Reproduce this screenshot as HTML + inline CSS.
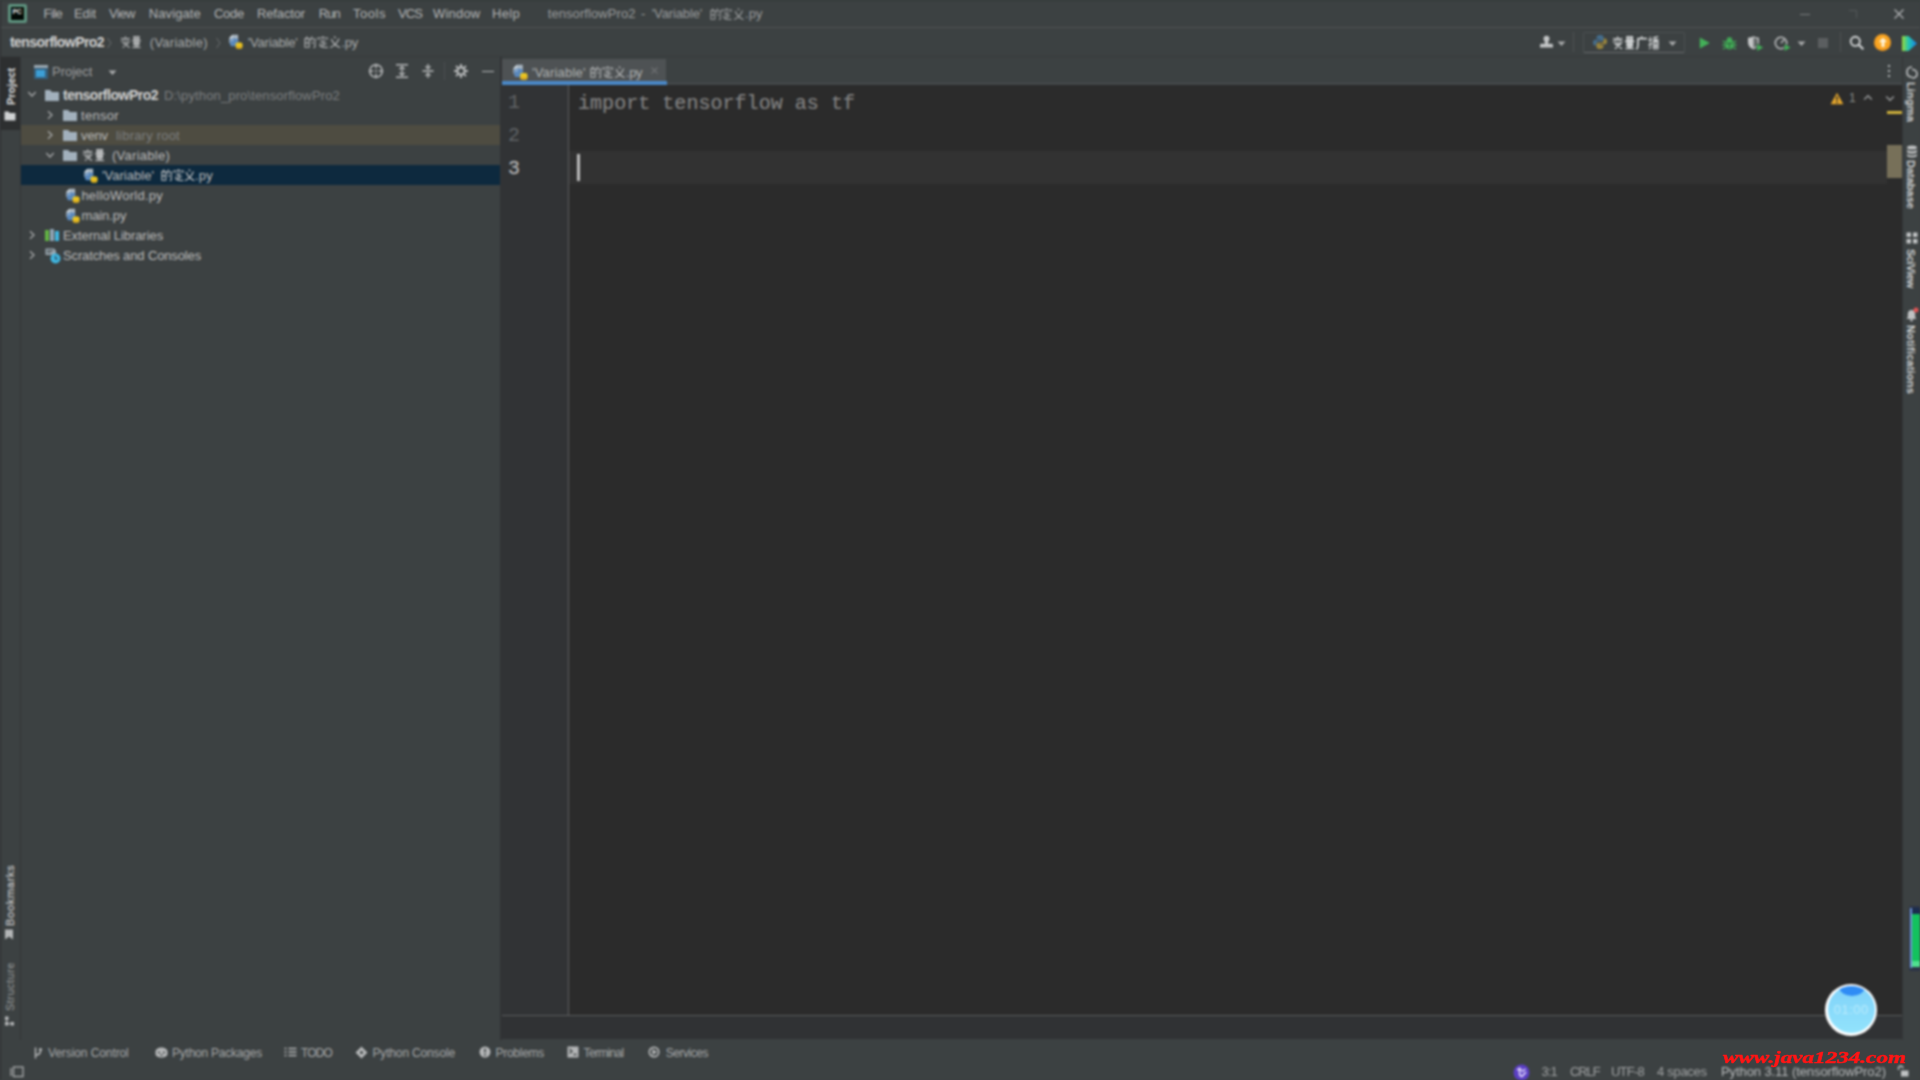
<!DOCTYPE html>
<html>
<head>
<meta charset="utf-8">
<title>PyCharm</title>
<style>
html,body{margin:0;padding:0;background:#3c4142;overflow:hidden;}
body{width:1920px;height:1080px;position:relative;font-family:"Liberation Sans",sans-serif;}
#root{position:absolute;left:0;top:0;width:1920px;height:1080px;overflow:hidden;background:#3c4142;}
#root div,#root span,#root svg{position:absolute;}
.t{white-space:pre;}
#fx{left:0;top:0;width:1920px;height:1080px;filter:blur(0.8px);}
</style>
</head>
<body>
<div id="root">
<div id="fx">
<!-- ================= BACKGROUND BLOCKS ================= -->
<div style="left:0;top:0;width:1920px;height:1080px;background:#3c4142;"></div>
<!-- title bar bottom line -->
<div style="left:0;top:27px;width:1920px;height:1px;background:#505354;"></div>
<!-- nav bar bottom line -->
<div style="left:0;top:56px;width:1920px;height:1px;background:#373b3c;"></div>
<!-- left stripe -->
<div style="left:0;top:57px;width:20px;height:983px;background:#3c4142;"></div>
<div style="left:0;top:57px;width:20px;height:73px;background:#2d2f30;"></div>
<div style="left:20px;top:57px;width:1px;height:983px;background:#333537;"></div>
<!-- project tree rows -->
<div style="left:21px;top:125px;width:479px;height:20px;background:#4e4c41;"></div>
<div style="left:21px;top:165px;width:479px;height:20px;background:#0d293e;"></div>
<!-- split between project and editor -->
<div style="left:500px;top:57px;width:2px;height:983px;background:#313335;"></div>
<!-- editor tab row -->
<div style="left:502px;top:57px;width:1400px;height:28px;background:#3c4142;"></div>
<div style="left:502px;top:59px;width:164px;height:26px;background:#4e5254;"></div>

<!-- editor -->
<div style="left:666px;top:82.700px;width:1236px;height:1.800px;background:#4c4f51;"></div>
<div style="left:502px;top:84.500px;width:1400px;height:954.500px;background:#2b2b2b;"></div>
<div style="left:502px;top:84.500px;width:66px;height:930.500px;background:#313335;"></div>
<div style="left:568px;top:84.500px;width:1px;height:930.500px;background:#5e5f60;"></div>
<div style="left:569px;top:151px;width:1318px;height:33px;background:#323232;"></div>
<div style="left:502px;top:80.700px;width:164.500px;height:4.300px;background:#4a88c7;"></div>
<!-- editor bottom strip -->
<div style="left:502px;top:1015px;width:1400px;height:1px;background:#5a5c5d;"></div>
<div style="left:502px;top:1016px;width:1400px;height:23px;background:#303234;"></div>
<!-- error stripe marks -->
<div style="left:1887px;top:110.500px;width:15px;height:3.500px;background:#d0b23c;"></div>
<div style="left:1887px;top:145px;width:15px;height:33px;background:#777059;"></div>
<!-- right stripe -->
<div style="left:1902px;top:57px;width:18px;height:983px;background:#3c4142;"></div>
<div style="left:1902px;top:57px;width:1px;height:983px;background:#333537;"></div>
<!-- top/left dark edge -->
<div style="left:0;top:0;width:1920px;height:1px;background:#2f3a37;"></div>
<div style="left:0;top:0;width:1px;height:1080px;background:#2c2e30;"></div>
<!-- ================= ICONS PART 1 ================= -->
<!-- PyCharm logo -->
<div style="left:8px;top:4px;width:19px;height:19px;background:#5f937f;border-radius:2px;"></div>
<div style="left:11px;top:7px;width:13px;height:13px;background:#020a06;"></div>
<span class="t" style="left:12.5px;top:7.5px;font-size:7px;line-height:8px;font-weight:700;color:#f0f0f0;letter-spacing:-0.3px;">PC</span>
<div style="left:13px;top:17px;width:5px;height:1px;background:#888;opacity:.0;"></div>

<!-- window controls -->
<div style="left:1800px;top:14px;width:10px;height:1px;background:#7a7c7d;"></div>
<svg style="left:1846px;top:8px;" width="14" height="14" viewBox="0 0 14 14"><path d="M3 2.5h7.5v7.5" fill="none" stroke="#54585a" stroke-width="1"/></svg>
<svg style="left:1893px;top:8px;" width="12" height="12" viewBox="0 0 12 12"><path d="M1.5 1.5l9 9M10.5 1.5l-9 9" fill="none" stroke="#b0b2b3" stroke-width="1.3"/></svg>

<!-- nav bar separators -->
<svg style="left:105px;top:36px;" width="8" height="14" viewBox="0 0 8 14"><path d="M2.5 2l3.5 5-3.5 5" fill="none" stroke="#6a6d6f" stroke-width="1"/></svg>
<svg style="left:214px;top:36px;" width="8" height="14" viewBox="0 0 8 14"><path d="M2.5 2l3.5 5-3.5 5" fill="none" stroke="#6a6d6f" stroke-width="1"/></svg>

<!-- python file icon symbol -->
<svg width="0" height="0" style="left:0;top:0;">
<defs>
<symbol id="py" viewBox="0 0 16 16">
  <path d="M1.300 4.300L4.800 0.800h6v8.700H1.300z" fill="#a9b6c1"/>
  <path d="M1.300 4.300L4.800 0.800v3.500z" fill="#d5dde3"/>
  <path d="M2.200 7c0-1.400 1.100-2.200 2.800-2.200h3.400c1.500 0 2.500.8 2.500 2.200v3.800c0 1.500-1 2.300-2.500 2.300H5c-1.700 0-2.800-.8-2.800-2.300z" fill="#5a88bc"/>
  <circle cx="4.600" cy="6.600" r=".8" fill="#dfe9f2"/>
  <rect x="8.200" y="9" width="7.300" height="6.700" rx="2" fill="#e9c522"/>
  <path d="M8.500 14.200h6.200" stroke="#d99a1c" stroke-width="1.600" opacity=".7"/>
</symbol>
<symbol id="folder" viewBox="0 0 16 16">
  <path d="M1 3h5.200l1.600 2H15v9H1z" fill="#a2b0bc"/>
</symbol>
<symbol id="cB" viewBox="0 0 12 12"><path d="M6 0.300v1.700M1 2.500h10M4.500 2.500v3M7.500 2.500v3M2.600 3.800l-1.200 1.800M9.400 3.800l1.200 1.800M2.500 6.700h6.800L3 11.600M3.800 7.600l6.900 4" stroke="currentColor" stroke-width="1.150" fill="none"/></symbol>
<symbol id="cL" viewBox="0 0 12 12"><path d="M3 0.600h6v3H3zM3 2.100h6M0.800 4.800h10.400M3 6.100h6v2.600H3zM3 7.400h6M6 6.100v5.200M3 10h6M1.300 11.500h9.400" stroke="currentColor" stroke-width="1.100" fill="none"/></symbol>
<symbol id="cD" viewBox="0 0 12 12"><path d="M3.200 0.400L2.500 2.300M1 2.600h4.200v8.600H1zM1 6.800h4.200M8.200 0.400L6.600 4.200M7.200 3h3.900v7.600c0 .8-.5 1.100-1.700 1.100M8 5.800l1.100 1.900" stroke="currentColor" stroke-width="1.150" fill="none"/></symbol>
<symbol id="cG" viewBox="0 0 12 12"><path d="M6 0v1.700M1 3.800V2h10v1.800M3 5h6M6 5v6.300M6 7.800h3.600M3.600 7.200L3 9.500c.3 1.200 3 2 8.300 2" stroke="currentColor" stroke-width="1.150" fill="none"/></symbol>
<symbol id="cY" viewBox="0 0 12 12"><path d="M5.300 0.400l1.300 1.900M10.200 2.400C8.500 6.500 5.500 9.700 1.200 11.600M2.400 3c1.400 4 4.400 7 8.800 8.600" stroke="currentColor" stroke-width="1.200" fill="none"/></symbol>
<symbol id="cA" viewBox="0 0 12 12"><path d="M6 0v1.800M1.500 2.200h9.700M2.100 2.200v5c0 2-.3 3.300-1.300 4.500" stroke="currentColor" stroke-width="1.250" fill="none"/></symbol>
<symbol id="cO" viewBox="0 0 12 12"><path d="M0.400 3.500h3.700M2.300 0.400v10.200c0 .7-.3 1-1.400 1M0.400 8.200l3.700-1.600M5 1.600l5.800-1.100M4.600 3.600h7M8.100 1.100v5M8.100 3.600L4.700 6.400M8.100 3.600l3.400 2.800M5.600 7.100h5v4.500h-5zM5.600 9.300h5M8.100 7.100v4.500" stroke="currentColor" stroke-width="1.050" fill="none"/></symbol>
<symbol id="arrR" viewBox="0 0 10 10"><path d="M3 1.300l4 3.700-4 3.700" fill="none" stroke="#a5a7a8" stroke-width="1.300"/></symbol>
<symbol id="arrD" viewBox="0 0 10 10"><path d="M1.300 3l3.700 4 3.700-4" fill="none" stroke="#a5a7a8" stroke-width="1.300"/></symbol>
</defs>
</svg>

<!-- nav bar: CJK (2 chars), py icon, CJK (3 chars) -->
<svg style="left:228px;top:34px;" width="15" height="15"><use href="#py"/></svg>
<!-- title CJK (3 chars) -->

<!-- project header: icon, dropdown, tool icons -->
<div style="left:33.500px;top:64.500px;width:14px;height:14px;background:#35607e;"></div>
<div style="left:33.500px;top:64.500px;width:14px;height:3.500px;background:#9aa7b0;"></div>
<div style="left:36px;top:69.500px;width:9px;height:7px;background:#3d9fd6;"></div>
<svg style="left:107.500px;top:69.500px;" width="9" height="6" viewBox="0 0 9 6"><path d="M0.500 0.500h8L4.500 5z" fill="#a8aaab"/></svg>
<!-- locate -->
<svg style="left:368px;top:63px;" width="16" height="16" viewBox="0 0 16 16"><circle cx="8" cy="8" r="6.300" fill="none" stroke="#b6b8b9" stroke-width="1.500"/><path d="M8 0.800v4.400M8 10.800v4.400M0.800 8h4.400M10.800 8h4.400" stroke="#b6b8b9" stroke-width="1.500"/><circle cx="8" cy="8" r="1" fill="#b6b8b9"/></svg>
<!-- expand all -->
<svg style="left:394px;top:63px;" width="16" height="16" viewBox="0 0 16 16"><path d="M2 1.800h12M2 14.200h12" stroke="#b6b8b9" stroke-width="1.600"/><path d="M8 4v8" stroke="#b6b8b9" stroke-width="1.400"/><path d="M5.300 6.300L8 3.600l2.700 2.700M5.300 9.700L8 12.400l2.700-2.700" fill="none" stroke="#b6b8b9" stroke-width="1.300"/></svg>
<!-- collapse all -->
<svg style="left:420px;top:63px;" width="16" height="16" viewBox="0 0 16 16"><path d="M2.500 8h11" stroke="#b6b8b9" stroke-width="1.600"/><path d="M8 1v4.500M8 10.500V15" stroke="#b6b8b9" stroke-width="1.400"/><path d="M5.500 3.300L8 5.800l2.500-2.500M5.500 12.700L8 10.200l2.500 2.500" fill="none" stroke="#b6b8b9" stroke-width="1.300"/></svg>
<div style="left:444px;top:62px;width:1px;height:18px;background:#4c4f51;"></div>
<!-- gear -->
<svg style="left:454px;top:64px;" width="14" height="14" viewBox="0 0 14 14"><circle cx="7" cy="7" r="3.600" fill="none" stroke="#b6b8b9" stroke-width="2.200"/><path d="M7 0v3M7 11v3M0 7h3M11 7h3M2.050 2.050l2.100 2.100M9.850 9.850l2.100 2.100M2.050 11.950l2.100-2.100M9.850 4.150l2.100-2.100" stroke="#b6b8b9" stroke-width="2"/></svg>
<!-- minus -->
<div style="left:481.500px;top:70.500px;width:12px;height:1.600px;background:#b6b8b9;"></div>

<!-- tree arrows -->
<svg style="left:26.500px;top:88.500px;" width="10" height="10"><use href="#arrD"/></svg>
<svg style="left:44.500px;top:110px;" width="10" height="10"><use href="#arrR"/></svg>
<svg style="left:44.500px;top:130px;" width="10" height="10"><use href="#arrR"/></svg>
<svg style="left:45px;top:149.500px;" width="10" height="10"><use href="#arrD"/></svg>
<svg style="left:26.500px;top:230px;" width="10" height="10"><use href="#arrR"/></svg>
<svg style="left:26.500px;top:250px;" width="10" height="10"><use href="#arrR"/></svg>
<!-- tree folders -->
<svg style="left:44px;top:86.500px;" width="16" height="16"><use href="#folder"/></svg>
<svg style="left:62px;top:106.500px;" width="16" height="16"><use href="#folder"/></svg>
<svg style="left:62px;top:126.500px;" width="16" height="16"><use href="#folder"/></svg>
<svg style="left:62px;top:146.500px;" width="16" height="16"><use href="#folder"/></svg>
<!-- tree CJK -->
<!-- tree py icons -->
<svg style="left:82.500px;top:167.500px;" width="15" height="15"><use href="#py"/></svg>
<svg style="left:64.500px;top:187.500px;" width="15" height="15"><use href="#py"/></svg>
<svg style="left:64.500px;top:207.500px;" width="15" height="15"><use href="#py"/></svg>
<!-- external libraries icon -->
<div style="left:45px;top:230px;width:3.500px;height:11px;background:#62b543;"></div>
<div style="left:50px;top:228.500px;width:3.500px;height:12.500px;background:#8fa3b3;"></div>
<div style="left:55px;top:231px;width:3.500px;height:10px;background:#40b6e0;"></div>
<!-- scratches icon -->
<svg style="left:44px;top:247px;" width="18" height="18" viewBox="0 0 18 18"><path d="M1.500 1.500h8.500l2 2V8H1.500z" fill="#9aa7b0"/><path d="M3 3.500h6M3 5.500h4" stroke="#3c4142" stroke-width="1"/><circle cx="11.500" cy="11.500" r="5" fill="#40b6e0"/><path d="M11.500 8.800v3h2.200" fill="none" stroke="#2b4a5c" stroke-width="1.200"/></svg>

<!-- tab: py icon, CJK, close -->
<svg style="left:512px;top:63.500px;" width="16" height="16"><use href="#py"/></svg>
<svg style="left:649.500px;top:65.500px;" width="9" height="9" viewBox="0 0 9 9"><path d="M1.500 1.500l6 6M7.500 1.500l-6 6" stroke="#6e7173" stroke-width="1.100" fill="none"/></svg>

<!-- ================= ICONS PART 2 ================= -->
<!-- caret -->
<div style="left:577px;top:154px;width:3px;height:27px;background:#bdbdbd;"></div>

<!-- toolbar: user icon + dropdown -->
<svg style="left:1539px;top:35px;" width="15" height="14" viewBox="0 0 15 14"><circle cx="7.500" cy="3.800" r="3" fill="#c3c5c6"/><path d="M5.800 5.500h3.400v3.300h3.300c1 0 1.500.6 1.500 1.500V12.500H1V10.300c0-.9.500-1.500 1.500-1.500h3.300z" fill="#c3c5c6"/></svg>
<svg style="left:1556.500px;top:40.500px;" width="9" height="6" viewBox="0 0 9 6"><path d="M0.500 0.500h8L4.500 5z" fill="#a8aaab"/></svg>
<div style="left:1572.500px;top:32px;width:1px;height:20px;background:#4f5254;"></div>
<!-- run config box -->
<div style="left:1583px;top:32px;width:102px;height:21px;border:1px solid #4c5052;border-bottom-color:#686b6d;box-sizing:border-box;border-radius:2px;"></div>
<svg style="left:1592px;top:34px;opacity:.6;" width="16" height="16" viewBox="0 0 16 16"><path d="M7.600 1C5.200 1 4.600 2 4.600 3.200V5h3.600v.7H3C1.700 5.700 1 6.800 1 8.600c0 1.800.7 2.900 2 2.900h1.400V9.600c0-1.300 1.100-2.400 2.400-2.400h3c1 0 1.800-.8 1.800-1.900V3.200C11.600 2 10.500 1 9 1z" fill="#4b8bbe"/><path d="M8.400 15c2.400 0 3-1 3-2.200V11H7.800v-.7H13c1.300 0 2-1.100 2-2.900 0-1.800-.7-2.900-2-2.900h-1.400v1.900c0 1.300-1.100 2.400-2.400 2.400h-3c-1 0-1.800.8-1.800 1.900v2.100c0 1.200 1.100 2.200 2.600 2.200z" fill="#d6b13c"/></svg>
<svg style="left:1636px;top:36.500px;color:#d4d6d7;" width="12" height="13" viewBox="0 0 12 12" preserveAspectRatio="none"><path d="M2 1.500h9M2 1.500v6c0 2-.5 3-1.500 4" stroke="currentColor" stroke-width="1.200" fill="none"/></svg>
<svg style="left:1667.500px;top:40.500px;" width="9" height="6" viewBox="0 0 9 6"><path d="M0.500 0.500h8L4.500 5z" fill="#a8aaab"/></svg>
<!-- run -->
<svg style="left:1699px;top:37px;" width="12" height="12" viewBox="0 0 12 12"><path d="M0.800 0.600L10.800 6 0.800 11.400z" fill="#43b058"/></svg>
<!-- debug -->
<svg style="left:1722px;top:36px;" width="15" height="15" viewBox="0 0 15 15"><ellipse cx="7.500" cy="8.300" rx="4.300" ry="5.200" fill="#43b058"/><path d="M4.700 3.500a2.800 2.300 0 0 1 5.600 0z" fill="#43b058"/><path d="M0.800 5l2.800 1.600M14.200 5l-2.800 1.600M0.500 9h3M14.500 9h-3M1 13l2.800-1.800M14 13l-2.800-1.800" stroke="#43b058" stroke-width="1.300"/><path d="M4 7.300h7M7.500 7.300v6" stroke="#2f5b3a" stroke-width="1"/></svg>
<!-- coverage -->
<svg style="left:1747px;top:35.500px;" width="18" height="16" viewBox="0 0 18 16"><path d="M1 1.800C3.500 1.800 5 1 6.500 0.300 8 1 9.500 1.800 12 1.800v4.800c0 3.200-2.300 5.600-5.500 6.700C3.300 12.200 1 9.800 1 6.600z" fill="#c4c6c7"/><path d="M6.500 1.600v10.400c2.300-1 4.300-2.900 4.300-5.400V2.900c-1.700-.1-3-.6-4.300-1.300z" fill="#3c4142" opacity=".7"/><path d="M9.800 7.600l7 4-7 4z" fill="#43b058" stroke="#3c4142" stroke-width=".8"/></svg>
<!-- profile -->
<svg style="left:1774px;top:35.500px;" width="18" height="16" viewBox="0 0 18 16"><circle cx="7" cy="7" r="5.700" fill="none" stroke="#b9bbbc" stroke-width="1.600"/><path d="M7 7L10.500 3.200" stroke="#b9bbbc" stroke-width="1.400"/><path d="M10.200 7.600l7 4-7 4z" fill="#43b058" stroke="#3c4142" stroke-width=".8"/></svg>
<svg style="left:1797px;top:40.500px;" width="9" height="6" viewBox="0 0 9 6"><path d="M0.500 0.500h8L4.500 5z" fill="#a8aaab"/></svg>
<!-- stop -->
<div style="left:1817.500px;top:38px;width:10px;height:10px;background:#5b5e60;"></div>
<div style="left:1839.500px;top:32px;width:1px;height:20px;background:#4f5254;"></div>
<!-- search -->
<svg style="left:1849px;top:35px;" width="16" height="16" viewBox="0 0 16 16"><circle cx="6.300" cy="6.300" r="4.600" fill="none" stroke="#d2d4d5" stroke-width="1.900"/><path d="M9.800 9.800l4.500 4.500" stroke="#d2d4d5" stroke-width="2.100"/></svg>
<!-- update orange -->
<div style="left:1874px;top:34px;width:17px;height:17px;border-radius:50%;background:radial-gradient(circle at 50% 45%,#ffb732 0,#f59a1b 70%,#e8850f 100%);"></div>
<svg style="left:1877.500px;top:37px;" width="10" height="11" viewBox="0 0 10 11"><path d="M5 0.800L9 5H6.400v5H3.600V5H1z" fill="#fff6e0"/></svg>
<!-- colorful icon -->
<svg style="left:1901px;top:34.500px;" width="17" height="17" viewBox="0 0 17 17"><defs><linearGradient id="cg" x1="0" y1="0" x2="1" y2="0"><stop offset="0" stop-color="#9bd93a"/><stop offset=".45" stop-color="#1fc4b4"/><stop offset="1" stop-color="#1b7fe8"/></linearGradient></defs><path d="M1 1h6.500L16 8.500 7.500 16H1z" fill="url(#cg)"/></svg>

<!-- editor top-right: 3 dots, warning, chevrons -->
<div style="left:1888.300px;top:64.800px;width:2px;height:2px;background:#b4b6b7;"></div>
<div style="left:1888.300px;top:70.200px;width:2px;height:2px;background:#b4b6b7;"></div>
<div style="left:1888.300px;top:75px;width:2px;height:2px;background:#b4b6b7;"></div>
<svg style="left:1830px;top:91.500px;" width="14" height="13" viewBox="0 0 14 13"><path d="M7 0.800L13.400 12.200H0.600z" fill="#e2a52c"/><path d="M7 4.300v4.200" stroke="#2b2b2b" stroke-width="1.500"/><circle cx="7" cy="10.300" r=".9" fill="#2b2b2b"/></svg>
<svg style="left:1863px;top:94px;" width="10" height="7" viewBox="0 0 10 7"><path d="M1.200 5.500L5 1.700l3.800 3.800" fill="none" stroke="#9a9c9d" stroke-width="1.400"/></svg>
<svg style="left:1884.600px;top:95px;" width="10" height="7" viewBox="0 0 10 7"><path d="M1.200 1.500L5 5.300l3.800-3.800" fill="none" stroke="#9a9c9d" stroke-width="1.400"/></svg>

<!-- left stripe icons -->
<svg style="left:4px;top:109.500px;" width="12" height="11" viewBox="0 0 12 11"><path d="M0.500 1.500h4l1.200 1.500h5.800v7.500h-11z" fill="#d0d2d3"/></svg>
<svg style="left:4px;top:928.500px;" width="10" height="11" viewBox="0 0 10 11"><path d="M1 0.500h8v10L5 7.500 1 10.500z" fill="#b4b6b7"/></svg>
<svg style="left:3.800px;top:1016px;" width="11" height="10" viewBox="0 0 11 10"><path d="M1 0.500h3.500v3.500H1zM1 6h3.500v3.500H1zM6.500 6H10v3.500H6.500z" fill="#b4b6b7"/><path d="M2.700 4v2M4.500 7.700h2" stroke="#b4b6b7" stroke-width="1"/></svg>

<!-- right stripe icons -->
<svg style="left:1905px;top:66px;" width="14" height="13" viewBox="0 0 14 13"><path d="M7 1C4 1 2 3 2 6s2 5 5 5M7 3.500C9.500 3.500 12 5 12 8s-2 4-5 4" fill="none" stroke="#c0c2c3" stroke-width="1.600"/></svg>
<svg style="left:1905.500px;top:144.500px;" width="12" height="13" viewBox="0 0 12 13"><ellipse cx="6" cy="2.600" rx="5" ry="2" fill="#c0c2c3"/><path d="M1 4.200c0 1.100 2.200 2 5 2s5-.9 5-2v2.600c0 1.100-2.200 2-5 2s-5-.9-5-2zM1 8.400c0 1.100 2.200 2 5 2s5-.9 5-2V10.500c0 1.100-2.200 2-5 2s-5-.9-5-2z" fill="#c0c2c3"/></svg>
<svg style="left:1905.500px;top:232px;" width="12" height="12" viewBox="0 0 12 12"><path d="M0.500 0.500h4.500v4.500H0.500zM7 0.500h4.500v4.500H7zM0.500 7h4.500v4.500H0.500zM7 7h4.500v4.500H7z" fill="#c0c2c3"/></svg>
<svg style="left:1904.500px;top:307px;" width="14" height="15" viewBox="0 0 14 15"><path d="M6.500 3C4 3 2.800 5 2.800 7.200v3L1.500 12h10l-1.300-1.800v-3C10.200 5 9 3 6.500 3z" fill="#c0c2c3"/><circle cx="6.500" cy="13.200" r="1.200" fill="#c0c2c3"/><circle cx="11" cy="3" r="2.500" fill="#e05555"/></svg>

<!-- bottom bar icons -->
<svg style="left:32.500px;top:1046.500px;" width="10" height="12" viewBox="0 0 10 12"><path d="M2.500 0.500v11M2.500 8C6 8 7.500 6.500 7.500 3.500" fill="none" stroke="#b4b6b7" stroke-width="1.500"/><circle cx="7.500" cy="2.500" r="1.600" fill="#b4b6b7"/></svg>
<svg style="left:155px;top:1046.500px;" width="13" height="11" viewBox="0 0 13 11"><path d="M6.500 0.500c3.300 0 6 1.800 6 4.200v2.600c0 1.700-2.700 3.200-6 3.200s-6-1.500-6-3.200V4.700c0-2.400 2.700-4.200 6-4.200z" fill="#b4b6b7"/><path d="M3 5.500h2M8 5.500h2M5.500 8h2" stroke="#3c4142" stroke-width="1.300"/></svg>
<svg style="left:284px;top:1046.500px;" width="13" height="10" viewBox="0 0 13 10"><path d="M0.500 1.500h2M4.500 1.500h8M0.500 5h2M4.500 5h8M0.500 8.500h2M4.500 8.500h8" stroke="#b4b6b7" stroke-width="1.700"/></svg>
<svg style="left:355px;top:1046px;" width="13" height="13" viewBox="0 0 13 13"><path d="M6.500 0.500l3 3-3 3-3-3zM6.500 6.500l3 3-3 3-3-3zM0.500 6.500l3-3 3 3-3 3zM12.500 6.500l-3-3-3 3 3 3z" fill="#b4b6b7"/><circle cx="6.500" cy="6.500" r="1.500" fill="#3c4142"/></svg>
<svg style="left:479px;top:1046px;" width="12" height="12" viewBox="0 0 12 12"><circle cx="6" cy="6" r="5.500" fill="#b4b6b7"/><path d="M6 2.800v3.700" stroke="#3c4142" stroke-width="1.600"/><circle cx="6" cy="8.800" r="1" fill="#3c4142"/></svg>
<svg style="left:566.500px;top:1046px;" width="12" height="12" viewBox="0 0 12 12"><rect x="0.500" y="0.500" width="11" height="11" fill="#b4b6b7"/><path d="M2.500 3l2.500 2.200L2.500 7.500M6.500 8.500h3" fill="none" stroke="#3c4142" stroke-width="1.300"/></svg>
<svg style="left:648px;top:1046px;" width="13" height="12" viewBox="0 0 13 12"><circle cx="6" cy="6" r="4.700" fill="none" stroke="#b4b6b7" stroke-width="1.700"/><path d="M4.300 3L9.300 6 4.300 9z" fill="#b4b6b7"/></svg>

<!-- status bar icons -->
<svg style="left:9.500px;top:1066px;" width="14" height="12" viewBox="0 0 14 12"><rect x="3.500" y="1" width="9.500" height="9.500" fill="none" stroke="#a9abac" stroke-width="1.300"/><path d="M1 2v8" stroke="#a9abac" stroke-width="1.300"/></svg>
<svg style="left:1513px;top:1063.500px;" width="17" height="17" viewBox="0 0 17 17"><circle cx="8.500" cy="8.500" r="8" fill="#5b3fc4"/><path d="M4 5.500h5M6.500 3.500v6c0 2 1 3 3 3M8.500 8l4-3M9 12.500l4-4.500" fill="none" stroke="#e8e0ff" stroke-width="1.500"/></svg>
<svg style="left:1897px;top:1065px;" width="12" height="12" viewBox="0 0 12 12"><path d="M1.500 5V3.300C1.500 1.800 2.500 1 3.700 1S6 1.800 6 3.300" fill="none" stroke="#c0c2c3" stroke-width="1.300"/><rect x="4" y="5.500" width="7.500" height="6" fill="#c0c2c3"/></svg>

<!-- green meter on right edge -->
<div style="left:1908.500px;top:905.500px;width:11.500px;height:65px;background:#2b3347;border-radius:2px 0 0 2px;"></div>
<div style="left:1910.300px;top:907.500px;width:2px;height:60px;background:#6f93d4;"></div>
<div style="left:1912.300px;top:907.500px;width:7.700px;height:7px;background:#1b2c4e;"></div>
<div style="left:1912.300px;top:914px;width:7.700px;height:53px;background:#13c25e;"></div>
<div style="left:1912.300px;top:961px;width:7.700px;height:6px;background:#4fe08f;"></div>

<!-- floating circle -->
<div style="left:1825px;top:983.500px;width:52px;height:52px;border-radius:50%;background:#ffffff;"></div>
<div style="left:1827.500px;top:986px;width:47px;height:47px;border-radius:50%;background:linear-gradient(#80d2f9,#92e3fc);overflow:hidden;">
  <div style="left:11.500px;top:-9px;width:26px;height:19px;border-radius:50%;background:#2f8cf5;"></div>
</div>
<span class="t" style="left:1833.500px;top:1002px;font-size:13px;line-height:16px;color:#d8f6ff;opacity:.6;letter-spacing:.5px;">01:00</span>


<span class="t" style="left:43.5px;top:4.0px;line-height:20px;font-size:13px;color:#b4b6b7;letter-spacing:-0.54px;">File</span>
<span class="t" style="left:74.0px;top:4.0px;line-height:20px;font-size:13px;color:#b4b6b7;letter-spacing:-0.10px;">Edit</span>
<span class="t" style="left:109.0px;top:4.0px;line-height:20px;font-size:13px;color:#b4b6b7;letter-spacing:-0.49px;">View</span>
<span class="t" style="left:148.8px;top:4.0px;line-height:20px;font-size:13px;color:#b4b6b7;letter-spacing:0.09px;">Navigate</span>
<span class="t" style="left:214.0px;top:4.0px;line-height:20px;font-size:13px;color:#b4b6b7;letter-spacing:-0.27px;">Code</span>
<span class="t" style="left:257.0px;top:4.0px;line-height:20px;font-size:13px;color:#b4b6b7;letter-spacing:-0.14px;">Refactor</span>
<span class="t" style="left:318.7px;top:4.0px;line-height:20px;font-size:13px;color:#b4b6b7;letter-spacing:-0.85px;">Run</span>
<span class="t" style="left:353.0px;top:4.0px;line-height:20px;font-size:13px;color:#b4b6b7;letter-spacing:0.53px;">Tools</span>
<span class="t" style="left:398.0px;top:4.0px;line-height:20px;font-size:13px;color:#b4b6b7;letter-spacing:-0.91px;">VCS</span>
<span class="t" style="left:433.0px;top:4.0px;line-height:20px;font-size:13px;color:#b4b6b7;letter-spacing:0.19px;">Window</span>
<span class="t" style="left:492.0px;top:4.0px;line-height:20px;font-size:13px;color:#b4b6b7;letter-spacing:0.31px;">Help</span>
<span class="t" style="left:547.7px;top:4.0px;line-height:20px;font-size:13px;color:#9a9c9d;letter-spacing:0.09px;">tensorflowPro2</span>
<span class="t" style="left:641.0px;top:4.0px;line-height:20px;font-size:13px;color:#9a9c9d;">-</span>
<span class="t" style="left:651.7px;top:4.0px;line-height:20px;font-size:13px;color:#9a9c9d;letter-spacing:-0.12px;">&#x27;Variable&#x27;</span>
<span class="t" style="left:745.0px;top:4.0px;line-height:20px;font-size:13px;color:#9a9c9d;letter-spacing:0.09px;">.py</span>
<span class="t" style="left:10.0px;top:32.1px;line-height:20px;font-size:14px;color:#d0d0d0;font-weight:700;letter-spacing:-0.56px;">tensorflowPro2</span>
<span class="t" style="left:149.8px;top:32.5px;line-height:20px;font-size:13px;color:#a8aaab;letter-spacing:0.26px;">(Variable)</span>
<span class="t" style="left:247.7px;top:32.5px;line-height:20px;font-size:13px;color:#a8aaab;letter-spacing:-0.17px;">&#x27;Variable&#x27;</span>
<span class="t" style="left:341.5px;top:32.5px;line-height:20px;font-size:13px;color:#a8aaab;letter-spacing:-0.28px;">.py</span>
<span class="t" style="left:52.0px;top:61.5px;line-height:20px;font-size:13px;color:#9c9e9f;">Project</span>
<span class="t" style="left:63.0px;top:85.2px;line-height:20px;font-size:14px;color:#d0d0d0;font-weight:700;letter-spacing:-0.49px;">tensorflowPro2</span>
<span class="t" style="left:164.0px;top:85.5px;line-height:20px;font-size:13px;color:#7d7f80;letter-spacing:0.14px;">D:\python_pro\tensorflowPro2</span>
<span class="t" style="left:81.0px;top:105.5px;line-height:20px;font-size:13px;color:#bbbbbb;letter-spacing:0.31px;">tensor</span>
<span class="t" style="left:81.0px;top:125.5px;line-height:20px;font-size:13px;color:#bbbbbb;letter-spacing:-0.12px;">venv</span>
<span class="t" style="left:116.0px;top:125.5px;line-height:20px;font-size:13px;color:#7d7f80;letter-spacing:0.21px;">library root</span>
<span class="t" style="left:112.0px;top:145.5px;line-height:20px;font-size:13px;color:#bbbbbb;letter-spacing:0.26px;">(Variable)</span>
<span class="t" style="left:102.0px;top:165.5px;line-height:20px;font-size:13px;color:#bbbbbb;letter-spacing:0.03px;">&#x27;Variable&#x27;</span>
<span class="t" style="left:195.0px;top:165.5px;line-height:20px;font-size:13px;color:#bbbbbb;letter-spacing:0.22px;">.py</span>
<span class="t" style="left:81.4px;top:185.5px;line-height:20px;font-size:13px;color:#bbbbbb;letter-spacing:0.24px;">helloWorld.py</span>
<span class="t" style="left:81.4px;top:205.5px;line-height:20px;font-size:13px;color:#bbbbbb;letter-spacing:-0.08px;">main.py</span>
<span class="t" style="left:63.0px;top:225.5px;line-height:20px;font-size:13px;color:#bbbbbb;letter-spacing:-0.06px;">External Libraries</span>
<span class="t" style="left:63.0px;top:245.5px;line-height:20px;font-size:13px;color:#bbbbbb;letter-spacing:-0.13px;">Scratches and Consoles</span>
<span class="t" style="left:508.0px;top:89.0px;line-height:28px;font-size:20px;color:#606366;font-family:'Liberation Mono', monospace;">1</span>
<span class="t" style="left:508.0px;top:122.0px;line-height:28px;font-size:20px;color:#606366;font-family:'Liberation Mono', monospace;">2</span>
<span class="t" style="left:508.0px;top:155.0px;line-height:28px;font-size:20px;color:#b0b0b0;font-family:'Liberation Mono', monospace;-webkit-text-stroke:0.3px #b0b0b0;">3</span>
<span class="t" style="left:578.0px;top:89.5px;line-height:28px;font-size:20px;color:#828282;font-family:'Liberation Mono', monospace;letter-spacing:0.04px;-webkit-text-stroke:0.2px #828282;">import tensorflow as tf</span>
<span class="t" style="left:1849.0px;top:88.3px;line-height:20px;font-size:12px;color:#8a8f8c;">1</span>
<span class="t" style="left:48.0px;top:1043.1px;line-height:20px;font-size:12px;color:#a6a8a9;letter-spacing:-0.09px;">Version Control</span>
<span class="t" style="left:172.0px;top:1043.1px;line-height:20px;font-size:12px;color:#a6a8a9;letter-spacing:-0.23px;">Python Packages</span>
<span class="t" style="left:301.0px;top:1043.1px;line-height:20px;font-size:12px;color:#a6a8a9;letter-spacing:-0.86px;">TODO</span>
<span class="t" style="left:372.5px;top:1043.1px;line-height:20px;font-size:12px;color:#a6a8a9;letter-spacing:-0.16px;">Python Console</span>
<span class="t" style="left:495.5px;top:1043.1px;line-height:20px;font-size:12px;color:#a6a8a9;letter-spacing:-0.27px;">Problems</span>
<span class="t" style="left:583.6px;top:1043.1px;line-height:20px;font-size:12px;color:#a6a8a9;letter-spacing:-0.67px;">Terminal</span>
<span class="t" style="left:665.7px;top:1043.1px;line-height:20px;font-size:12px;color:#a6a8a9;letter-spacing:-0.46px;">Services</span>
<span class="t" style="left:1541.6px;top:1061.8px;line-height:20px;font-size:13px;color:#a0a2a3;letter-spacing:-1.03px;">3:1</span>
<span class="t" style="left:1570.0px;top:1061.8px;line-height:20px;font-size:13px;color:#a0a2a3;letter-spacing:-1.11px;">CRLF</span>
<span class="t" style="left:1611.0px;top:1061.8px;line-height:20px;font-size:13px;color:#a0a2a3;letter-spacing:-0.77px;">UTF-8</span>
<span class="t" style="left:1657.0px;top:1061.8px;line-height:20px;font-size:13px;color:#a0a2a3;letter-spacing:-0.29px;">4 spaces</span>
<span class="t" style="left:1721.0px;top:1061.8px;line-height:20px;font-size:13px;color:#b8babb;letter-spacing:-0.09px;">Python 3.11 (tensorflowPro2)</span>
<span class="t" style="left:532.0px;top:62.6px;line-height:20px;font-size:13px;color:#b0b2b3;letter-spacing:0.19px;">&#x27;Variable&#x27;</span>
<span class="t" style="left:626.0px;top:62.6px;line-height:20px;font-size:13px;color:#b0b2b3;letter-spacing:-0.45px;">.py</span>
<span class="t" style="left:10.5px;top:96.0px;line-height:18px;font-size:11px;color:#e0e2e3;font-weight:700;letter-spacing:-0.04px;transform-origin:0 50%;transform:rotate(-90deg);">Project</span>
<span class="t" style="left:9.6px;top:916.5px;line-height:18px;font-size:11px;color:#c0c2c3;letter-spacing:0.72px;-webkit-text-stroke:0.25px #c0c2c3;transform-origin:0 50%;transform:rotate(-90deg);">Bookmarks</span>
<span class="t" style="left:9.6px;top:1002.0px;line-height:18px;font-size:11px;color:#9a9c9d;letter-spacing:0.48px;transform-origin:0 50%;transform:rotate(-90deg);">Structure</span>
<span class="t" style="left:1910.5px;top:73.0px;line-height:18px;font-size:11px;color:#d2d4d5;font-weight:700;letter-spacing:0.15px;transform-origin:0 50%;transform:rotate(90deg);">Lingma</span>
<span class="t" style="left:1910.5px;top:151.0px;line-height:18px;font-size:11px;color:#d2d4d5;font-weight:700;transform-origin:0 50%;transform:rotate(90deg);">Database</span>
<span class="t" style="left:1910.5px;top:239.5px;line-height:18px;font-size:11px;color:#d2d4d5;font-weight:700;letter-spacing:-0.34px;transform-origin:0 50%;transform:rotate(90deg);">SciView</span>
<span class="t" style="left:1910.5px;top:316.0px;line-height:18px;font-size:11px;color:#d2d4d5;font-weight:700;letter-spacing:0.18px;transform-origin:0 50%;transform:rotate(90deg);">Notifications</span>
<svg style="left:119.6px;top:36.0px;color:#b0b2b3;" width="10.9" height="12.0" viewBox="0 0 12 12" preserveAspectRatio="none"><use href="#cB"/></svg>
<svg style="left:131.1px;top:36.0px;color:#b0b2b3;" width="10.9" height="12.0" viewBox="0 0 12 12" preserveAspectRatio="none"><use href="#cL"/></svg>
<svg style="left:304.0px;top:36.0px;color:#b0b2b3;" width="11.9" height="12.0" viewBox="0 0 12 12" preserveAspectRatio="none"><use href="#cD"/></svg>
<svg style="left:316.5px;top:36.0px;color:#b0b2b3;" width="11.9" height="12.0" viewBox="0 0 12 12" preserveAspectRatio="none"><use href="#cG"/></svg>
<svg style="left:329.0px;top:36.0px;color:#b0b2b3;" width="11.9" height="12.0" viewBox="0 0 12 12" preserveAspectRatio="none"><use href="#cY"/></svg>
<svg style="left:709.5px;top:8.0px;color:#9a9c9d;" width="11.2" height="12.0" viewBox="0 0 12 12" preserveAspectRatio="none"><use href="#cD"/></svg>
<svg style="left:721.3px;top:8.0px;color:#9a9c9d;" width="11.2" height="12.0" viewBox="0 0 12 12" preserveAspectRatio="none"><use href="#cG"/></svg>
<svg style="left:733.1px;top:8.0px;color:#9a9c9d;" width="11.2" height="12.0" viewBox="0 0 12 12" preserveAspectRatio="none"><use href="#cY"/></svg>
<svg style="left:82.0px;top:149.2px;color:#c2c4c5;" width="11.4" height="12.0" viewBox="0 0 12 12" preserveAspectRatio="none"><use href="#cB"/></svg>
<svg style="left:94.0px;top:149.2px;color:#c2c4c5;" width="11.4" height="12.0" viewBox="0 0 12 12" preserveAspectRatio="none"><use href="#cL"/></svg>
<svg style="left:160.8px;top:169.2px;color:#c2c4c5;" width="11.1" height="12.0" viewBox="0 0 12 12" preserveAspectRatio="none"><use href="#cD"/></svg>
<svg style="left:172.5px;top:169.2px;color:#c2c4c5;" width="11.1" height="12.0" viewBox="0 0 12 12" preserveAspectRatio="none"><use href="#cG"/></svg>
<svg style="left:184.2px;top:169.2px;color:#c2c4c5;" width="11.1" height="12.0" viewBox="0 0 12 12" preserveAspectRatio="none"><use href="#cY"/></svg>
<svg style="left:590.0px;top:65.5px;color:#b0b2b3;" width="11.4" height="12.0" viewBox="0 0 12 12" preserveAspectRatio="none"><use href="#cD"/></svg>
<svg style="left:602.0px;top:65.5px;color:#b0b2b3;" width="11.4" height="12.0" viewBox="0 0 12 12" preserveAspectRatio="none"><use href="#cG"/></svg>
<svg style="left:614.0px;top:65.5px;color:#b0b2b3;" width="11.4" height="12.0" viewBox="0 0 12 12" preserveAspectRatio="none"><use href="#cY"/></svg>
<svg style="left:1612.0px;top:36.3px;color:#dcdedf;" width="11.4" height="13.5" viewBox="0 0 12 12" preserveAspectRatio="none"><use href="#cB"/></svg>
<svg style="left:1624.0px;top:36.3px;color:#dcdedf;" width="11.4" height="13.5" viewBox="0 0 12 12" preserveAspectRatio="none"><use href="#cL"/></svg>
<svg style="left:1636.0px;top:36.3px;color:#dcdedf;" width="11.4" height="13.5" viewBox="0 0 12 12" preserveAspectRatio="none"><use href="#cA"/></svg>
<svg style="left:1648.0px;top:36.3px;color:#dcdedf;" width="11.4" height="13.5" viewBox="0 0 12 12" preserveAspectRatio="none"><use href="#cO"/></svg>
</div>
<div id="fx2" style="left:0;top:0;width:1920px;height:1080px;filter:blur(0.45px);">
<span class="t" style="left:1723.0px;top:1045.5px;line-height:24px;font-size:17px;color:#ff1515;font-weight:700;font-family:'Liberation Serif', serif;font-style:italic;-webkit-text-stroke:0.5px #ff1515;transform-origin:0 50%;transform:scaleX(1.361);">www.java1234.com</span>
</div>
</div>
</body>
</html>
